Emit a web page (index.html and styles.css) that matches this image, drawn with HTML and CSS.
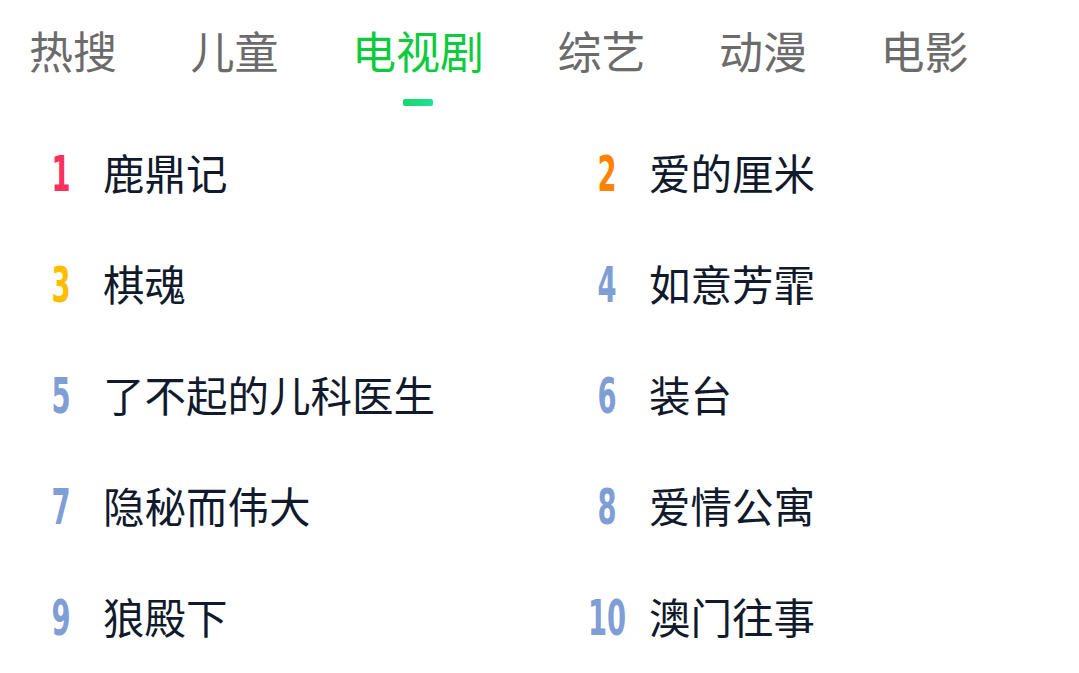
FILE: index.html
```html
<!DOCTYPE html>
<html lang="zh-CN">
<head>
<meta charset="utf-8">
<link rel="stylesheet" href="styles.css">
</head>
<body>
<div class="tabs">
  <div class="tab"><span class="tab-label">热搜</span><span class="bar"></span></div>
  <div class="tab"><span class="tab-label">儿童</span><span class="bar"></span></div>
  <div class="tab active"><span class="tab-label">电视剧</span><span class="bar"></span></div>
  <div class="tab"><span class="tab-label">综艺</span><span class="bar"></span></div>
  <div class="tab"><span class="tab-label">动漫</span><span class="bar"></span></div>
  <div class="tab"><span class="tab-label">电影</span><span class="bar"></span></div>
</div>
<div class="list">
  <div class="row"><span class="num n1"><span class="digits">1</span></span><span class="title">鹿鼎记</span></div>
  <div class="row"><span class="num n2"><span class="digits">2</span></span><span class="title">爱的厘米</span></div>
  <div class="row"><span class="num n3"><span class="digits">3</span></span><span class="title">棋魂</span></div>
  <div class="row"><span class="num"><span class="digits">4</span></span><span class="title">如意芳霏</span></div>
  <div class="row"><span class="num"><span class="digits">5</span></span><span class="title">了不起的儿科医生</span></div>
  <div class="row"><span class="num"><span class="digits">6</span></span><span class="title">装台</span></div>
  <div class="row"><span class="num"><span class="digits">7</span></span><span class="title">隐秘而伟大</span></div>
  <div class="row"><span class="num"><span class="digits">8</span></span><span class="title">爱情公寓</span></div>
  <div class="row"><span class="num"><span class="digits">9</span></span><span class="title">狼殿下</span></div>
  <div class="row"><span class="num"><span class="digits">10</span></span><span class="title">澳门往事</span></div>
</div>
</body>
</html>
```

FILE: styles.css
```css
html, body {
  margin: 0;
  padding: 0;
  background: #ffffff;
}
body {
  width: 1079px;
  height: 673px;
  overflow: hidden;
  font-family: "Noto Sans CJK SC", "Noto Sans", sans-serif;
}
.tabs {
  display: flex;
  gap: 73.5px;
  padding: 28px 0 0 29px;
}
.tab {
  display: flex;
  flex-direction: column;
  align-items: center;
}
.tab-label {
  font-size: 44px;
  line-height: 44px;
  color: #6b6b6b;
  white-space: nowrap;
}
.tab.active .tab-label {
  color: #0ccb3c;
}
.bar {
  display: block;
  width: 30px;
  height: 7px;
  margin-top: 27px;
  border-radius: 2px;
  background: transparent;
}
.tab.active .bar {
  background: linear-gradient(90deg, #17d66a, #1de39a);
}
.list {
  display: grid;
  grid-template-columns: 546px 546px;
  padding-left: 21px;
  margin-top: 10px;
}
.row {
  display: flex;
  align-items: center;
  height: 111px;
}
.num {
  display: flex;
  justify-content: center;
  width: 80px;
  padding-top: 7px;
  color: #7f9ed6;
  font-family: "DejaVu Sans", "Liberation Sans", sans-serif;
  font-weight: bold;
  font-size: 49px;
  line-height: 50px;
}
.digits {
  display: inline-block;
  transform: scaleX(0.56);
}
.n1 { color: #fc2f5e; }
.n2 { color: #ff8205; }
.n3 { color: #ffbd00; }
.title {
  margin-left: 2px;
  font-size: 41.5px;
  line-height: 50px;
  color: #101a2c;
  white-space: nowrap;
}
```
